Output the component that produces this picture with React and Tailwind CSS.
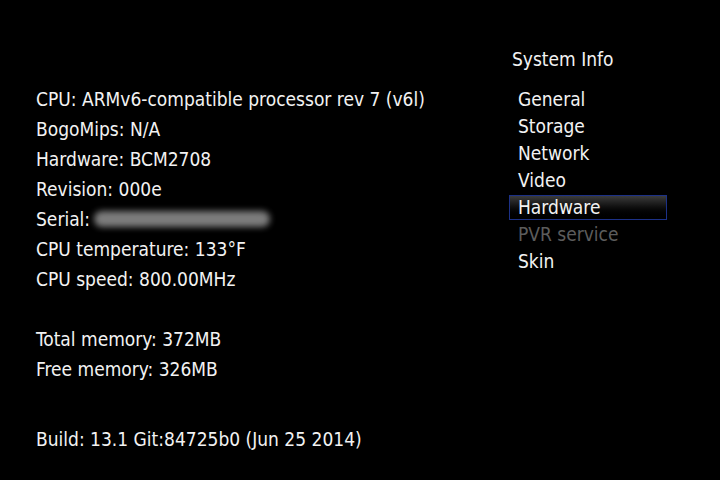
const info = [
  "CPU: ARMv6-compatible processor rev 7 (v6l)",
  "BogoMips: N/A",
  "Hardware: BCM2708",
  "Revision: 000e",
  null,
  "CPU temperature: 133°F",
  "CPU speed: 800.00MHz",
];

const menu = [
  { label: "General" },
  { label: "Storage" },
  { label: "Network" },
  { label: "Video" },
  { label: "Hardware", active: true },
  { label: "PVR service", disabled: true },
  { label: "Skin" },
];

const font = { fontFamily: '"DejaVu Sans Condensed", "DejaVu Sans", sans-serif' };

export default function App() {
  return (
    <div
      className="w-[720px] h-[480px] bg-black text-[#f2f2f2] text-[19px] flex overflow-hidden"
      style={font}
    >
      {/* Left: hardware details */}
      <div className="flex-1 pl-[36px] pt-[84px] flex flex-col">
        {info.map((line, i) =>
          line ? (
            <div key={i} className="h-[30px] leading-[30px] whitespace-nowrap">
              {line}
            </div>
          ) : (
            <div key={i} className="h-[30px] leading-[30px] flex items-center">
              <span>Serial:</span>
              <span className="ml-[4px] w-[176px] h-[16px] rounded-full bg-[#8a8a8a] blur-[3px] opacity-90" />
            </div>
          )
        )}
        <div className="h-[30px]" />
        <div className="h-[30px] leading-[30px]">Total memory: 372MB</div>
        <div className="h-[30px] leading-[30px]">Free memory: 326MB</div>
        <div className="h-[30px] leading-[30px] mt-[40px]">
          Build: 13.1 Git:84725b0 (Jun 25 2014)
        </div>
      </div>

      {/* Right: section menu */}
      <div className="w-[211px] shrink-0 pt-[45px] pr-[53px] flex flex-col">
        <div className="h-[28px] leading-[28px] pl-[3px]">System Info</div>
        <div className="h-[13px]" />
        {menu.map((item) => (
          <div
            key={item.label}
            className={`h-[27px] flex items-center ${
              item.disabled ? "text-[#5c5c5c]" : ""
            }`}
          >
            {item.active ? (
              <div className="w-full h-[25px] flex items-center pl-[8px] border border-[#1c3187] bg-gradient-to-b from-[#3c3c3c] via-[#0e0e0e] to-black">
                {item.label}
              </div>
            ) : (
              <span className="pl-[9px]">{item.label}</span>
            )}
          </div>
        ))}
      </div>
    </div>
  );
}
